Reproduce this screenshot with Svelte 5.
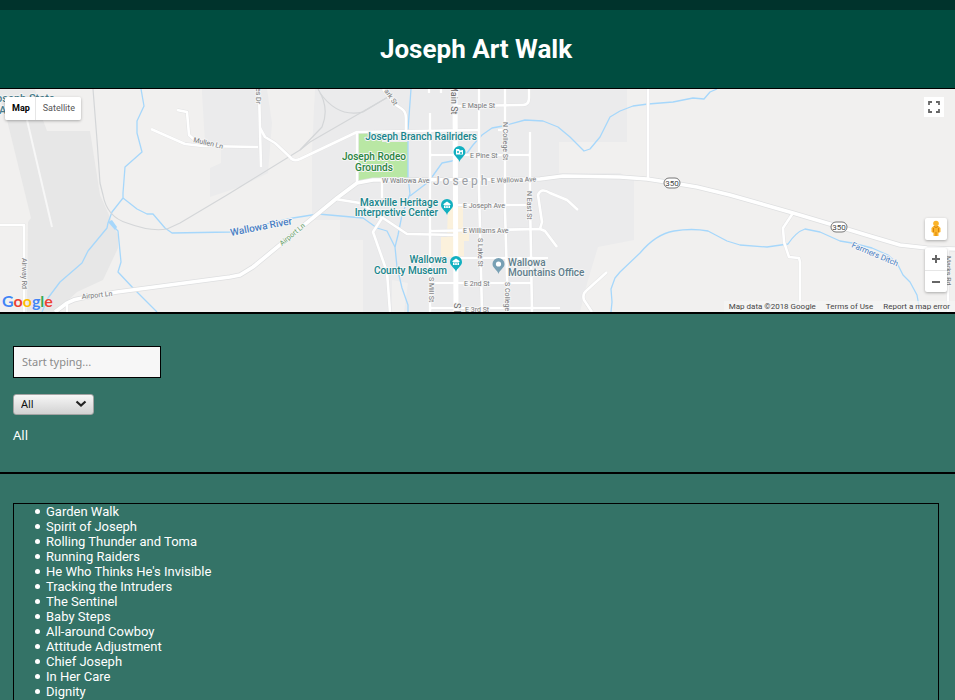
<script>
  const works = [
    'Garden Walk',
    'Spirit of Joseph',
    'Rolling Thunder and Toma',
    'Running Raiders',
    "He Who Thinks He's Invisible",
    'Tracking the Intruders',
    'The Sentinel',
    'Baby Steps',
    'All-around Cowboy',
    'Attitude Adjustment',
    'Chief Joseph',
    'In Her Care',
    'Dignity'
  ];

  const streams = [
    'M141 89L144 106L137 121V133L142 152L125 167L123 193V198L112 212L108 223L107 228L88 251L82 263L60 282L48 298L42 312',
    'M123 198L137 209L147 214H153L165 228L172 233L230 232L293 218L318 214L363 218L377 228L387 231L395 247L397 267L402 288L408 305V312',
    'M115 228L118 231L121 262L118 272L133 288L157 312',
    'M411 89L408 130V177L410 194L402 215L398 235L395 247',
    'M410 196L427 183L432 177L442 163L452 161L467 153L473 145L482 135L492 128L503 126L525 120L543 121L558 127L570 137L584 151L590 149L600 137L610 117L620 111L633 106L648 104L673 102L693 98L704 99L710 92L717 89',
    'M611 312L612 302L611 289L615 278L620 272L640 253Q656 234 674 231T708 231L727 241L740 245L767 247L788 244Q796 232 805 229L820 232L840 241L852 243L872 248L888 255L897 263L903 275L910 282L917 295L920 312'
  ];
  const rails = [
    'M93 89L97 140L100 183L103 195Q107 217 127 223Q151 232 167 229L180 223L227 195L240 187L300 150L310 142L388 97',
    'M318 89Q330 108 322 127L300 150',
    'M320 93Q338 118 363 112L388 97'
  ];
  const roads = [
    'M0 225H24V312',
    'M67 303V312',
    'M151 129L185 144L203 146L258 147',
    'M177 110L187 112L189 135L197 142',
    'M259 89L260 130L261 167',
    'M260 128L265 137L275 143L290 157Q293 162 300 159L357 132L479 130',
    'M383 89L393 103L402 109Q406 112 406 118V131',
    'M357 133V183',
    'M382 180V198',
    'M335 199L360 203L383 218L407 234L456 235',
    'M382 210V218L373 232L387 272L390 312',
    'M429 89V93M430 113V312',
    'M479 89V190L482 312',
    'M505 89V210L508 312',
    'M530 132V200L532 312',
    'M441 89V93',
    'M457 106L523 105Q529 105 529 98V89',
    'M498 130H505',
    'M430 155H530',
    'M457 205H530',
    'M430 231L540 229L545 231L557 247',
    'M540 229L542 222L538 195Q541 187 550 193L567 200L578 210',
    'M457 258H548',
    'M430 283H532',
    'M430 308H560',
    'M607 272L587 290Q582 294 584 300L592 312',
    'M648 89V179',
    'M793 213L783 228L784 242L789 257L799 258L800 262V312',
    'M948 249V312'
  ];
  const mains = [
    'M55 312L67 303Q74 299 82 298L117 292L230 277L240 275L253 267L337 198L357 183L373 180L540 179L563 176L620 177L647 179L673 183L697 187L730 195L793 213L840 227L873 237L900 245L927 248L955 249'
  ];

  const streets = [
    ['E Maple St', 462, 108, 0],
    ['E Pine St', 470, 158, 0],
    ['W Wallowa Ave', 382, 183, 0],
    ['E Wallowa Ave', 491, 183, -2],
    ['E Joseph Ave', 463, 208, 0],
    ['E Williams Ave', 463, 233, 0],
    ['E 2nd St', 464, 286, 0],
    ['E 3rd St', 465, 312, 0],
    ['N College St', 503, 122, 90],
    ['N East St', 527, 191, 90],
    ['S Lake St', 478, 238, 90],
    ['S College St', 505, 282, 90],
    ['S Mill St', 429, 277, 90],
    ['es Dr', 256, 88, 90],
    ['ark St', 384, 91, 56],
    ['Airway Rd', 22, 258, 90],
    ['Airport Ln', 82, 299, -6],
    ['Mullen Ln', 193, 142, 13],
    ['Marks Rd', 946, 256, 90]
  ];

  const places = [
    ['#17858c', 'end', 477, [['Joseph Branch Railriders', 140]]],
    ['#2a8540', 'middle', 374, [['Joseph Rodeo', 160], ['Grounds', 171]]],
    ['#17858c', 'end', 438, [['Maxville Heritage', 206], ['Interpretive Center', 216]]],
    ['#17858c', 'end', 447, [['Wallowa', 263], ['County Museum', 274]]],
    ['#607d8b', 'start', 508, [['Wallowa', 266], ['Mountains Office', 276]]]
  ];

  const shields = [[672, 183], [839, 227]];
  const museums = [[447, 205], [456, 262]];

  let query = $state('');
  let category = $state('All');
  const shown = $derived(works.filter((w) => w.toLowerCase().includes(query.toLowerCase())));
</script>

<div class="page">
  <header><h1>Joseph Art Walk</h1></header>

  <section class="map" aria-label="Map">
    <svg class="canvas" viewBox="0 89 955 223" preserveAspectRatio="xMidYMid slice">
      <rect y="89" width="955" height="223" fill="#f1f0ef" />
      <g fill="#ebebec">
        <path d="M202 93L205 143L221 150V163L210 168V197L240 187L268 173L272 123L267 89H202Z" />
        <path d="M315 89H627V142H559V173H620L634 180V240L598 247L588 280L580 312H363V240H340V220H312V150Z" />
        <path d="M0 122H12L28 200L30 218L24 226H0Z" fill="#f1f0ef" />
      </g>
      <path d="M7 120H43L47 131H90L100 195L118 235V248L103 280L77 292L55 312H27L28 222L31 218Z" fill="#e7e7e7" />
      <path d="M0 89H35L43 120H7L0 100Z" fill="#e9e9e9" />
      <path d="M392 280L408 283L404 312H392Z" fill="#f1f0ef" />
      <path d="M448 207H463V230H469V241H464V257H441V237H447Z" fill="#fbf1dc" />
      <path d="M357 133H382V142H408V178L380 179L358 183Z" fill="#b9e7a4" />
      <path d="M27 120L45 197L52 227" fill="none" stroke="#f7f7f7" stroke-width="2" />
      <g class="line" stroke="#a6d7fb" stroke-width="1.3">
        {#each streams as d}<path {d} />{/each}
      </g>
      <path d="M108 222L112 220L117 227L115 230Z" fill="#a6d7fb" />
      <g class="line" stroke="#d4d6d8" stroke-width="1.2">
        {#each rails as d}<path {d} />{/each}
      </g>
      <g class="line" stroke="#e3e3e4" stroke-width="3.5">
        {#each roads as d}<path {d} />{/each}
      </g>
      <g class="line" stroke="#dedfe0" stroke-width="5">
        {#each mains as d}<path {d} />{/each}
      </g>
      <g class="line" stroke="#fff" stroke-width="2.6">
        {#each roads as d}<path {d} />{/each}
      </g>
      <g class="line" stroke="#fff" stroke-width="3.6">
        {#each mains as d}<path {d} />{/each}
        <path d="M455 89L456 312" stroke-width="5" />
      </g>

      <g class="street">
        {#each streets as [name, x, y, turn]}
          <text transform="translate({x} {y}) rotate({turn})">{name}</text>
        {/each}
        <text transform="translate(282 246) rotate(-40)" fill="#66a067">Airport Ln</text>
        <text transform="translate(451 84) rotate(90)" class="main">Main St</text>
        <text transform="translate(454 303) rotate(90)" class="main">S Main St</text>
      </g>
      <g class="water">
        <text transform="translate(231 236) rotate(-11)" class="river">Wallowa River</text>
        <text transform="translate(851 247) rotate(23)">Farmers Ditch</text>
      </g>
      <text class="town" x="433" y="185">Joseph</text>
      <g class="place">
        {#each places as [fill, anchor, x, lines]}
          {#each lines as [text, y]}
            <text {x} {y} {fill} text-anchor={anchor}>{text}</text>
          {/each}
        {/each}
        <text x="-10" y="102" class="park">Joseph State</text>
        <text x="-1" y="114" class="park">Airport</text>
      </g>

      {#each museums as [x, y]}
        <g transform="translate({x} {y})">
          <path d="M0 10C-1 6-6 4-6 0A6 6 0 0 1 6 0C6 4 1 6 0 10Z" fill="#12b0c0" />
          <path d="M-3.500-1L0-3.500L3.500-1V0H-3.500ZM-3 .5H3V3H-3Z" fill="#fff" />
          <path d="M-1.200 1V2.600M1.200 1V2.600" stroke="#12b0c0" stroke-width=".8" />
        </g>
      {/each}
      <g transform="translate(459.500 152)">
        <path d="M0 10C-1 6-6 4-6 0A6 6 0 0 1 6 0C6 4 1 6 0 10Z" fill="#12b0c0" />
        <path d="M-3.500-3H-.5L.5-1.500L3.500-2V2.500H-3.500Z" fill="#fff" />
        <circle cx="-1.500" cy="0" r="1" fill="#12b0c0" /><circle cx="1.500" cy="1" r="1" fill="#12b0c0" />
      </g>
      <g transform="translate(498.500 264)">
        <path d="M0 10C-1 6-6 4-6 0A6 6 0 0 1 6 0C6 4 1 6 0 10Z" fill="#78a0b4" />
        <circle r="2.600" fill="#fff" />
      </g>
      {#each shields as [x, y]}
        <g transform="translate({x} {y})">
          <rect x="-8" y="-5" width="16" height="10" rx="5" fill="#fff" stroke="#777" />
          <text class="shield" y="3" text-anchor="middle">350</text>
        </g>
      {/each}
    </svg>

    <div class="types">
      <button class="active">Map</button>
      <button>Satellite</button>
    </div>
    <button class="full" aria-label="Toggle fullscreen view">
      <svg width="12" height="12" viewBox="0 0 12 12"><path d="M1 4V1H4M8 1H11V4M11 8V11H8M4 11H1V8" fill="none" stroke="#666" stroke-width="1.800" /></svg>
    </button>
    <div class="tools">
      <button class="pegman" aria-label="Street View">
        <svg width="12" height="18" viewBox="0 0 12 18">
          <path d="M3.500 6H8.500L10.500 8V12L8.500 13V16H3.500V13L1.500 12V8Z" fill="#fbb42a" />
          <circle cx="6" cy="3.500" r="2.800" fill="#fbb42a" />
          <path d="M4 6.500Q6 8.500 8 6.500M6 12V16M3.500 8V12M8.500 8V12" fill="none" stroke="#d98412" stroke-width="1" />
        </svg>
      </button>
      <div class="zoom">
        <button aria-label="Zoom in"><svg width="8" height="8" viewBox="0 0 8 8"><path d="M0 4H8M4 0V8" stroke="#666" stroke-width="2" /></svg></button>
        <button aria-label="Zoom out"><svg width="8" height="8" viewBox="0 0 8 8"><path d="M0 4H8" stroke="#666" stroke-width="2" /></svg></button>
      </div>
    </div>
    <a class="google" href="#google"><span class="b">G</span><span class="r">o</span><span class="y">o</span><span class="b">g</span><span class="g">l</span><span class="r">e</span></a>
    <div class="legal">
      <span>Map data ©2018 Google</span>
      <a href="#terms">Terms of Use</a>
      <a href="#report">Report a map error</a>
    </div>
  </section>

  <section class="filters">
    <input type="text" placeholder="Start typing..." aria-label="Search" bind:value={query} />
    <div class="pick">
      <select aria-label="Category" bind:value={category}>
        <option>All</option>
      </select>
      <svg width="12" height="8" viewBox="0 0 12 8"><path d="M1.500 1.500L6 5.500L10.500 1.500" fill="none" stroke="#222" stroke-width="2.200" /></svg>
    </div>
    <p>{category}</p>
  </section>

  <section class="results">
    <ul>
      {#each shown as work}<li>{work}</li>{/each}
    </ul>
  </section>
</div>

<style>
  :global(body) { background: #347367; }
  .page {
    font: 13px/15px Roboto, sans-serif;
    color: #fff;
    border-top: 10px solid #00332c;
  }
  button { font: inherit; border: 0; padding: 0; background: #fff; cursor: pointer; }
  header {
    background: #004d40;
    border-bottom: 1px solid #000;
    padding: 24px 16px 24px 13px;
    text-align: center;
  }
  h1 { margin: 0; font-size: 26px; line-height: 30px; font-weight: 700; }

  .map { position: relative; height: 223px; overflow: hidden; border-bottom: 2px solid #000; }
  .canvas { display: block; width: 100%; height: 100%; }
  .line { fill: none; stroke-linejoin: round; }
  .canvas text { paint-order: stroke; stroke: #f5f5f5; stroke-width: 2px; stroke-linejoin: round; }
  .street { font-size: 7px; fill: #77797b; }
  .street .main { font-size: 9px; fill: #666; }
  .water { font-size: 8px; fill: #4a80c4; }
  .water .river { font-size: 10px; font-weight: 500; }
  .canvas .town { font-size: 12px; letter-spacing: 3px; fill: #9a9ea5; }
  .place { font-size: 10px; font-weight: 500; }
  .place .park { font-size: 11px; fill: #4b7f8e; }
  .canvas .shield { font-size: 8px; fill: #444; stroke: none; }

  .types {
    position: absolute; left: 5px; top: 8px; display: flex;
    box-shadow: 0 1px 3px rgba(0, 0, 0, .3); border-radius: 2px; overflow: hidden;
    font-size: 9px; line-height: 23px;
  }
  .types button { padding: 0 6px 0 7px; color: #565656; }
  .types .active { color: #000; font-weight: 700; border-right: 1px solid #e6e6e6; padding: 0 5px 0 7px; }
  .full { position: absolute; right: 11px; top: 8px; width: 20px; height: 20px; display: grid; place-items: center; }
  .tools { position: absolute; right: 8px; top: 129px; display: grid; gap: 8px; }
  .tools button { width: 22px; height: 22px; display: grid; place-items: center; }
  .pegman, .zoom { box-shadow: 0 1px 3px rgba(0, 0, 0, .3); border-radius: 2px; }
  .zoom { background: #fff; height: 44px; }
  .zoom button { background: none; }
  .zoom button + button { border-top: 1px solid #e6e6e6; }
  .google {
    position: absolute; left: 2px; bottom: 1px; text-decoration: none;
    font: 700 16px/20px Lato, sans-serif;
  }
  .google span { text-shadow: 0 0 1px #fff; }
  .b { color: #4285f4; } .r { color: #ea4335; } .y { color: #fbbc05; } .g { color: #34a853; }
  .legal {
    position: absolute; right: 0; bottom: 0; display: flex; gap: 10px; padding: 0 5px;
    background: rgba(245, 245, 245, .7); color: #444; font-size: 8px; line-height: 11px;
  }
  .legal a { color: inherit; text-decoration: none; }

  .filters {
    display: flex; flex-direction: column; align-items: flex-start;
    padding: 32px 16px 29px 13px; border-bottom: 2px solid #000;
  }
  input {
    box-sizing: border-box; width: 148px; height: 32px; margin: 0; padding: 0 8px 2px;
    border: 1px solid #000; background: #f7f7f7; color: #222;
    font: 11px "Noto Sans", sans-serif;
  }
  input::placeholder { color: #8b8b8b; opacity: 1; }
  .pick { position: relative; margin: 16px 0 13px; display: flex; }
  select {
    appearance: none; box-sizing: border-box; width: 81px; height: 21px; padding: 0 7px 2px;
    border: 1px solid #a3a3a3; border-radius: 3px;
    background: linear-gradient(#f6f6f6, #d2d2d2); color: #111;
    font: 11px "Noto Sans", sans-serif;
  }
  .pick svg { position: absolute; right: 7px; top: 6px; pointer-events: none; }
  .filters p { margin: 0; font-family: "Noto Sans", sans-serif; }

  .results { padding: 29px 16px 32px 13px; }
  ul { margin: 0; padding: 0 0 32px 21px; border: 1px solid #000; list-style: none; }
  li { display: flex; align-items: center; gap: 6px; }
  li::before { content: ""; width: 5px; height: 5px; border-radius: 50%; background: #fff; }
</style>
